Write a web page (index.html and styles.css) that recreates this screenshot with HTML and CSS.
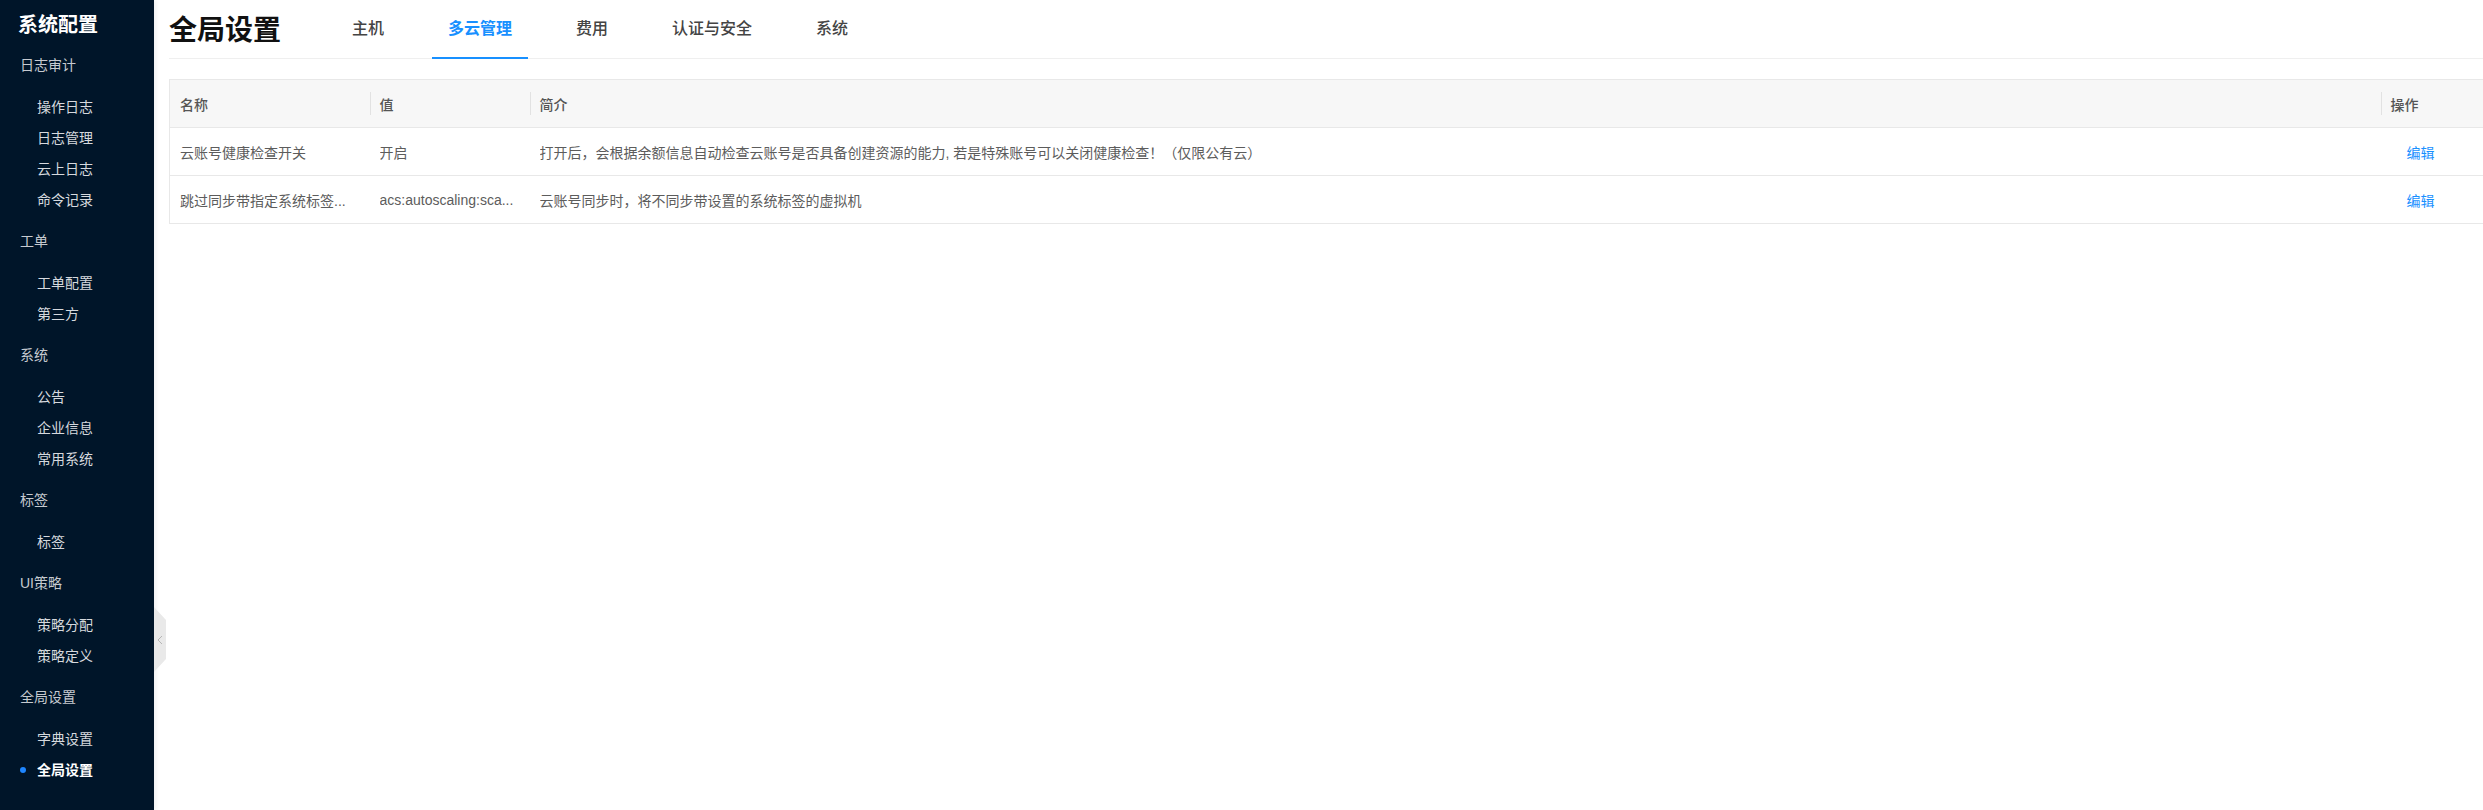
FILE: index.html
```html
<!DOCTYPE html>
<html lang="zh-CN">
<head>
<meta charset="utf-8">
<title>全局设置</title>
<link rel="stylesheet" href="styles.css">
</head>
<body>
<div class="layout">
  <aside class="sider">
    <div class="sider-title">系统配置</div>
    <nav class="menu">
      <div class="group">
        <div class="group-label">日志审计</div>
        <ul class="items">
          <li>操作日志</li>
          <li>日志管理</li>
          <li>云上日志</li>
          <li>命令记录</li>
        </ul>
      </div>
      <div class="group">
        <div class="group-label">工单</div>
        <ul class="items">
          <li>工单配置</li>
          <li>第三方</li>
        </ul>
      </div>
      <div class="group">
        <div class="group-label">系统</div>
        <ul class="items">
          <li>公告</li>
          <li>企业信息</li>
          <li>常用系统</li>
        </ul>
      </div>
      <div class="group">
        <div class="group-label">标签</div>
        <ul class="items">
          <li>标签</li>
        </ul>
      </div>
      <div class="group">
        <div class="group-label">UI策略</div>
        <ul class="items">
          <li>策略分配</li>
          <li>策略定义</li>
        </ul>
      </div>
      <div class="group">
        <div class="group-label">全局设置</div>
        <ul class="items">
          <li>字典设置</li>
          <li class="active">全局设置</li>
        </ul>
      </div>
    </nav>
  </aside>
  <div class="collapse-handle">
    <svg width="6" height="10" viewBox="0 0 6 10"><path d="M5 1 L1 5 L5 9" fill="none" stroke="#b5b5b5" stroke-width="1"/></svg>
  </div>
  <main class="main">
    <header class="page-header">
      <h1 class="page-title">全局设置</h1>
      <div class="tabs">
        <div class="tab">主机</div>
        <div class="tab active">多云管理</div>
        <div class="tab">费用</div>
        <div class="tab">认证与安全</div>
        <div class="tab">系统</div>
      </div>
    </header>
    <table class="table">
      <colgroup>
        <col class="c-name">
        <col class="c-value">
        <col class="c-desc">
        <col class="c-action">
      </colgroup>
      <thead>
        <tr>
          <th>名称</th>
          <th><span class="sep"></span>值</th>
          <th><span class="sep"></span>简介</th>
          <th><span class="sep"></span>操作</th>
        </tr>
      </thead>
      <tbody>
        <tr>
          <td><div class="ellipsis">云账号健康检查开关</div></td>
          <td><div class="ellipsis">开启</div></td>
          <td><div class="ellipsis">打开后，会根据余额信息自动检查云账号是否具备创建资源的能力, 若是特殊账号可以关闭健康检查！（仅限公有云）</div></td>
          <td class="action"><a class="link">编辑</a></td>
        </tr>
        <tr>
          <td><div class="ellipsis">跳过同步带指定系统标签...</div></td>
          <td><div class="ellipsis">acs:autoscaling:sca...</div></td>
          <td><div class="ellipsis">云账号同步时，将不同步带设置的系统标签的虚拟机</div></td>
          <td class="action"><a class="link">编辑</a></td>
        </tr>
      </tbody>
    </table>
  </main>
</div>
</body>
</html>
```

FILE: styles.css
```css
* { box-sizing: border-box; }

html, body {
  margin: 0;
  padding: 0;
  height: 100%;
}

body {
  font-family: "Liberation Sans", "Noto Sans CJK SC", sans-serif;
  font-size: 14px;
  color: #333;
  background: #fff;
  overflow: hidden;
}

.layout {
  display: flex;
  height: 810px;
  position: relative;
}

/* ---------- sidebar ---------- */
.sider {
  width: 154px;
  flex: 0 0 154px;
  background: #001529;
  color: #c9cdd3;
  box-shadow: 2px 0 4px rgba(0, 21, 41, 0.06);
  z-index: 1;
}

.sider-title {
  height: 50px;
  line-height: 48px;
  padding-left: 18px;
  font-size: 20px;
  font-weight: 700;
  color: #fff;
  font-family: "Noto Sans CJK SC", sans-serif;
}

.group-label {
  line-height: 31px;
  padding-left: 20px;
  color: #c6cad0;
}

.items {
  list-style: none;
  margin: 10.5px 0;
  padding: 0;
}

.items li {
  position: relative;
  line-height: 31px;
  padding-left: 37px;
  color: #d6d9de;
}

.items li.active {
  color: #fff;
  font-weight: 600;
}

.items li.active::before {
  content: "";
  position: absolute;
  left: 20px;
  top: 12.5px;
  width: 6px;
  height: 6px;
  border-radius: 50%;
  background: #1e86ff;
}

.collapse-handle {
  position: absolute;
  left: 154px;
  top: 607px;
  width: 12px;
  height: 65px;
  background: #e9e9e9;
  clip-path: polygon(0 0, 100% 13px, 100% 52px, 0 100%);
  display: flex;
  align-items: center;
  justify-content: center;
  z-index: 2;
}

/* ---------- main ---------- */
.main {
  flex: 1 1 auto;
  min-width: 0;
  padding-left: 15px;
  overflow: hidden;
}

.page-header {
  display: flex;
  align-items: flex-start;
  height: 59px;
  border-bottom: 1px solid #efefef;
}

.page-title {
  margin: 0;
  line-height: 56px;
  font-size: 28px;
  font-weight: 700;
  color: #111;
  font-family: "Noto Sans CJK SC", sans-serif;
}

.tabs {
  display: flex;
  gap: 32px;
  margin-left: 55px;
}

.tab {
  padding: 0 16px;
  line-height: 57px;
  font-size: 16px;
  font-weight: 500;
  color: #444;
  border-bottom: 2px solid transparent;
}

.tab.active {
  color: #1890ff;
  font-weight: 600;
  border-bottom-color: #1890ff;
}

/* ---------- table ---------- */
.table {
  margin-top: 20px;
  width: 2340px;
  table-layout: fixed;
  border-collapse: collapse;
  border: 1px solid #e8e8e8;
}

.c-name { width: 200px; }
.c-value { width: 160px; }
.c-desc { width: 1851px; }
.c-action { width: 129px; }

.table th,
.table td {
  height: 48px;
  padding: 0 10px;
  text-align: left;
  border-bottom: 1px solid #e8e8e8;
  vertical-align: middle;
}

.table th {
  position: relative;
  background: #f7f7f7;
  color: #555;
  font-weight: 500;
  font-size: 14px;
}

.sep {
  position: absolute;
  left: 0;
  top: 12px;
  width: 1px;
  height: 23px;
  background: #e2e2e2;
}

.table td {
  color: #5c5c5c;
}

.ellipsis {
  white-space: nowrap;
  overflow: hidden;
  text-overflow: ellipsis;
}

.table td.action {
  padding-left: 26px;
}

.link {
  color: #1890ff;
  cursor: pointer;
}
```
